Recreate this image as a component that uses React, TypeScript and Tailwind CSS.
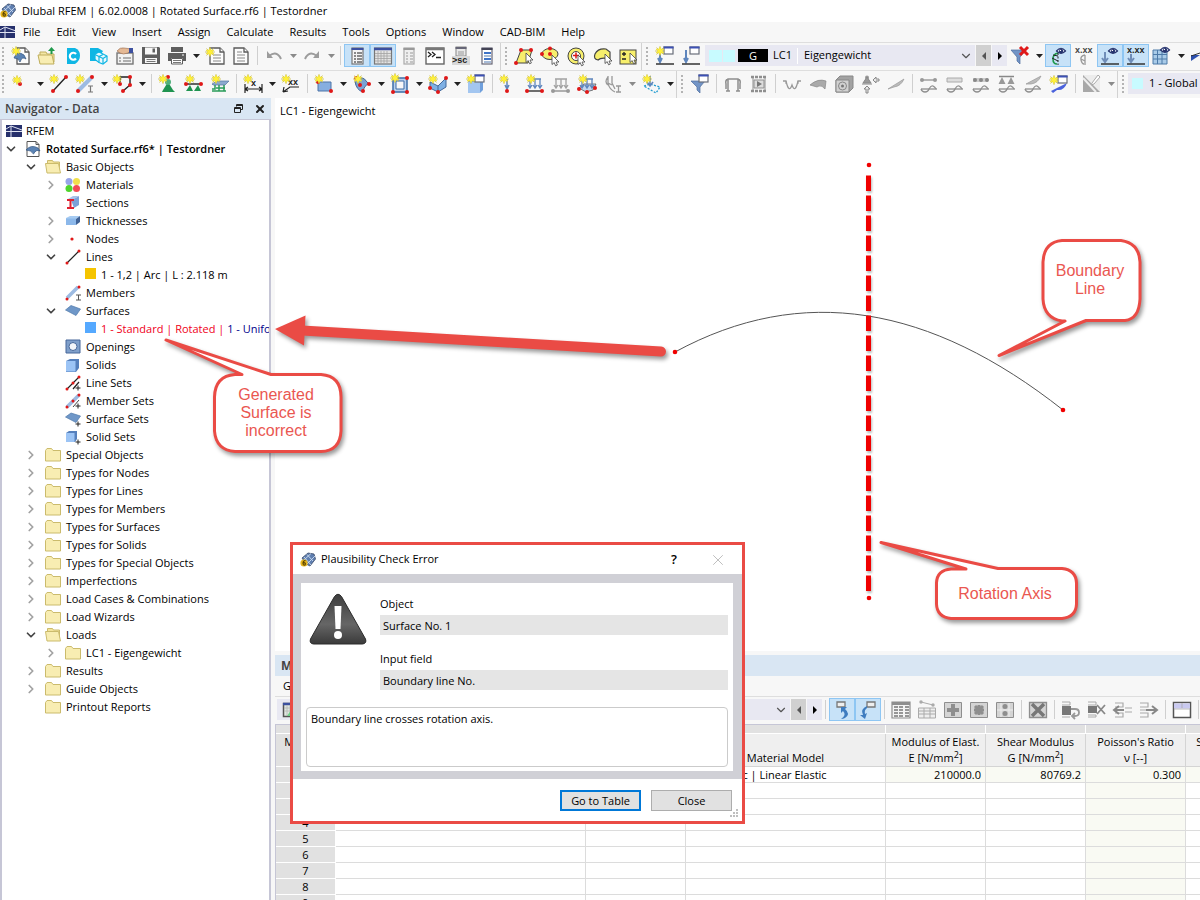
import { ReactNode } from "react";
import { ChevronDown, ChevronRight, X } from "lucide-react";

/* ---------- small drawing parts shared by the toolbar icons ---------- */

const Star = ({ x = 5, y = 5 }: { x?: number; y?: number }) => (
    <g transform={`translate(${x} ${y})`}>
        <path d="M0-5V5M-5 0H5M-3.500-3.500L3.500 3.500M3.500-3.500L-3.500 3.500" stroke="#c9bc50" strokeWidth=".8" />
        <path d="M0-4L1.3-1.8 4-2 2.2 0 4 2 1.3 1.8 0 4-1.3 1.8-4 2-2.2 0-4-2-1.3-1.8Z" fill="#fff03a" stroke="#e4d42c" strokeWidth=".5" />
    </g>
);

const Dot = ({ x, y, c = "#e01818" }: { x: number; y: number; c?: string }) => <circle cx={x} cy={y} r="2" fill={c} />;

const Win = ({ x, y }: { x: number; y: number }) => (
    <g>
        <rect x={x} y={y} width="9" height="7" fill="#fff" stroke="#6a6f7a" strokeWidth="1.2" />
        <path d={`M${x - 0.6} ${y + 0.5}h10.200`} stroke="#3c50b4" strokeWidth="2" />
    </g>
);

const Cursor = ({ x, y }: { x: number; y: number }) => (
    <path transform={`translate(${x} ${y})`} d="M0-1V8.500L2.200 6.600 3.600 9.800 5.400 9 4 6H7Z" fill="#fff" stroke="#444" strokeWidth=".8" />
);

const Eye = ({ x, y }: { x: number; y: number }) => (
    <g transform={`translate(${x} ${y})`}>
        <path d="M-4.5 0Q0-5.500 4.500 0Q0 4.500-4.500 0Z" fill="#e8ecfa" stroke="#27346e" strokeWidth="1.2" />
        <circle r="2.2" fill="#27346e" />
        <circle cx="-.6" cy="-.6" r=".7" fill="#fff" />
    </g>
);

const Wave = ({ y = 14 }: { y?: number }) => (
    <g fill="none" stroke="#8f8f8f" strokeWidth="1.3">
        <path d={`M2 ${y + 1}H18`} />
        <path d={`M2 ${y + 1}Q3 ${y + 4} 6 ${y + 4}Q9 ${y + 4} 10 ${y + 1}Q12 ${y - 3} 14 ${y - 2}T17 ${y + 1}`} />
    </g>
);

const Page = ({ x = 5, y = 2, w = 12, h = 16 }: { x?: number; y?: number; w?: number; h?: number }) => (
    <g fill="#fcfcfc" stroke="#5a5a5a" strokeWidth="1.3">
        <path d={`M${x} ${y}h${w - 4}l4 4v${h - 4}h${-w}Z`} />
        <path d={`M${x + w - 4} ${y}v4h4`} />
    </g>
);

const XText = ({ x, y, children, fill = "#222", size = 9 }: { x: number; y: number; children: ReactNode; fill?: string; size?: number }) => (
    <text x={x} y={y} fontSize={size} fontWeight="700" fill={fill} fontFamily="Liberation Sans, Arial, sans-serif">{children}</text>
);

const DownArrows = ({ c }: { c: string }) => <path d="M4 5H16M5 5v9M10 5v9M15 5v9M3 11l2 3 2-3M8 11l2 3 2-3M13 11l2 3 2-3" fill="none" stroke={c} strokeWidth="1.3" />;

/* ---------- toolbar building blocks ---------- */

function Tool({ label, on, children }: { label: string; on?: boolean; children: ReactNode }) {
    return (
        <button type="button" aria-label={label} className={`flex h-[23px] w-[26px] shrink-0 items-center justify-center border ${on ? "border-[#8ec6f3] bg-[#c7e2f8]" : "border-transparent hover:bg-[#e3eef8]"}`}>
            <svg width="20" height="20" viewBox="0 0 20 20" className="shrink-0 overflow-visible" fill="none">{children}</svg>
        </button>
    );
}

function Drop({ light, label = "More" }: { light?: boolean; label?: string }) {
    return (
        <button type="button" aria-label={label} className="flex h-[23px] w-3 shrink-0 items-center justify-center">
            <svg width="7" height="4" viewBox="0 0 7 4"><path d="M0 0H7L3.5 4Z" fill={light ? "#8a8a8a" : "#222"} /></svg>
        </button>
    );
}

const Sep = () => (
    <div className="flex h-[19px] w-[7px] shrink-0 justify-center"><div className="w-px bg-[#cfcfcf]" /></div>
);

const Grip = () => (
    <div className="flex h-[23px] w-[10px] shrink-0 items-center justify-center">
        <svg width="2" height="20"><path d="M1 1V20" stroke="#b4b4b4" strokeWidth="2" strokeDasharray="2 2" /></svg>
    </div>
);

const Group = ({ children }: { children: ReactNode }) => (
    <div className="flex h-full shrink-0 items-center border-r border-[#d2d2d2] pb-0.5">{children}</div>
);

function Step({ dir, disabled }: { dir: "prev" | "next"; disabled?: boolean }) {
    return (
        <button type="button" aria-label={dir === "prev" ? "Previous" : "Next"} disabled={disabled} className={`ml-px flex h-[21px] w-[15px] shrink-0 items-center justify-center ${disabled ? "bg-[#d0d0d0]" : "bg-[#e8e8f2]"}`}>
            <svg width="4" height="8" viewBox="0 0 4 8"><path d={dir === "prev" ? "M4 0V8L0 4Z" : "M0 0V8L4 4Z"} fill={disabled ? "#555" : "#000"} /></svg>
        </button>
    );
}

const AppLogo = () => (
    <svg width="16" height="16" viewBox="0 0 16 16" className="shrink-0">
        <path d="M2 6L8 1 14 2 15.500 7 10 14 6 12Z" fill="#5f7fb0" stroke="#3a4a68" strokeWidth=".8" />
        <path d="M4 5L11 13M7 2.500L13 9M3 9L11 1.500M7 12L15 4" stroke="#cddcf2" strokeWidth=".9" />
        <circle cx="4" cy="11" r="3.600" fill="#e6b51c" />
        <path d="M5.500 8.500Q3 8.500 3 11.500Q3.200 13.500 5 13Q6 11.500 4.600 10.700L3 11.300" fill="none" stroke="#5a4300" strokeWidth="1.100" />
    </svg>
);

const BridgeLogo = () => (
    <svg width="16" height="12" viewBox="0 0 16 12" className="shrink-0">
        <rect width="16" height="12" fill="#26306c" />
        <path d="M0 6.500H16M5 1V12M0 4L5 1L16 5" stroke="#dfe3f2" strokeWidth="1" fill="none" />
    </svg>
);

function MainToolbar() {
    return (
        <div className="flex h-7 items-center overflow-hidden border-t border-[#dedede]">
            <Group>
                <div className="-ml-0.5"><Grip /></div>
                <Tool label="New">
                    <Page x={6} /><path d="M3 12Q6 4 13 9L15 13Q11 10 9 16Q8 12 3 12Z" fill="#5b83b4" stroke="#2f527e" strokeWidth=".7" /><Star x={5} y={5} />
                </Tool>
                <Tool label="Open">
                    <path d="M3 16V6h6l1 2h7v8Z" fill="#f3e6a4" stroke="#bfae5c" /><path d="M1 9h14l2 9H3Z" fill="#f8edb2" stroke="#bfae5c" /><path d="M13.500 8V5h-2.500L14.500 1l3.500 4h-2.500v3Z" fill="#1f9a4c" />
                </Tool>
                <Tool label="Dlubal Center">
                    <path d="M4 2h8q5 2 5 7.500T12 18H4Z" fill="#0fb6e4" /><path d="M13 8A3.500 3.500 0 1 0 13 12.500" stroke="#fff" strokeWidth="2.200" />
                </Tool>
                <Tool label="Cloud models">
                    <path d="M1 2h8l5 3-6 10H1Z" fill="#0fb6e4" /><path d="M6 8l4-2 4 2 4 2v5L14 18l-4-1.500-4-3Z" fill="#e9f8fd" stroke="#0fb6e4" strokeWidth="1.200" /><path d="M6 8.500l4 2L14 8.500M10 10.500v6M14 12.500l4-2.500M14 12.500v5M10 10.500l4 2" stroke="#0fb6e4" strokeWidth="1.200" />
                </Tool>
                <Tool label="Model data">
                    <rect x="2" y="7" width="16" height="11" fill="#f2f2f2" stroke="#777" strokeWidth="1.400" /><path d="M4 12h2M8 12h8M4 15h2M8 15h8" stroke="#999" strokeWidth="1.300" /><path d="M2 5Q5 1 9 2L17 3 13 7Q8 9 5 7Z" fill="#e5b995" stroke="#94674a" strokeWidth=".6" /><path d="M14 2h4v5h-4Z" fill="#3c50a0" />
                </Tool>
                <Tool label="Save">
                    <path d="M1 1h17l1 1v16H1Z" fill="#5e5e5e" /><path d="M4 1.500h12v7H4Z" fill="#f7f7f7" /><path d="M11.500 2.500H14v4h-2.500Z" fill="#5e5e5e" /><path d="M4 12h12v5H4Z" fill="#f7f7f7" /><path d="M5.500 13.500h9M5.500 15.500h9" stroke="#777" />
                </Tool>
                <Tool label="Print">
                    <path d="M4 1h12v5H4Z" fill="#5e5e5e" /><path d="M1 7h18v8h-3v-3H4v3H1Z" fill="#5e5e5e" /><path d="M4.500 12.500h11V18h-11Z" fill="#fff" stroke="#5e5e5e" /><path d="M6 14.500h8M6 16.500h8" stroke="#777" /><path d="M15 9h2" stroke="#fff" />
                </Tool>
                <Drop />
                <Tool label="New printout report"><Page x={5} w={14} /><path d="M8 9h8M8 12h8M8 15h8" stroke="#888" strokeWidth="1.200" /><Star x={5} y={6} /></Tool>
                <Tool label="Printout report"><Page x={3} w={14} /><path d="M6 6h5M6 9h8M6 12h8M6 15h8" stroke="#888" strokeWidth="1.200" /></Tool>
                <Sep />
                <Tool label="Undo"><path d="M3 5V12H9Z" fill="#9c9c9c" /><path d="M5 10Q13 4 17 13" stroke="#9c9c9c" strokeWidth="2" /></Tool>
                <Drop light />
                <Tool label="Redo"><path d="M17 5V12H11Z" fill="#9c9c9c" /><path d="M15 10Q7 4 3 13" stroke="#9c9c9c" strokeWidth="2" /></Tool>
                <Drop light />
                <Sep />
                <Tool label="Navigator" on>
                    <rect x="5" y="2" width="11" height="16" fill="#f4f4f4" stroke="#777" strokeWidth="1.200" /><path d="M4.500 3h12" stroke="#3c50a0" strokeWidth="2" /><path d="M7 7h2M7 10h2M7 13h2M7 16h2" stroke="#666" strokeWidth="1.300" /><path d="M10 7h5M10 10h5M10 13h5M10 16h5" stroke="#666" strokeWidth="1.300" />
                </Tool>
                <Tool label="Tables" on>
                    <rect x="1.500" y="2" width="17" height="16" fill="#e4e4e4" stroke="#777" strokeWidth="1.200" /><path d="M1 3h18" stroke="#3c50a0" strokeWidth="2.500" /><path d="M2 7.500h16M2 10h16M2 12.500h16M2 15h16M5 5v13M8 5v13M11 5v13M14 5v13" stroke="#a2a2a2" strokeWidth=".8" />
                </Tool>
                <Tool label="Control panel"><rect x="5" y="2" width="10" height="16" fill="#efefef" stroke="#aaa" strokeWidth="1.200" /><path d="M4.500 3h11" stroke="#999" strokeWidth="2" /><path d="M7 7h2M7 10h2M7 13h2M7 16h2M11 7h3M11 10h3M11 13h3M11 16h3" stroke="#999" /></Tool>
                <Tool label="Console"><rect x="1" y="2" width="18" height="16" fill="#fff" stroke="#666" strokeWidth="1.400" /><path d="M1 3h18" stroke="#777" strokeWidth="2.500" /><path d="M3 6l3 2.500L3 11M7 6l3 2.500L7 11M11 11.500h5" stroke="#222" strokeWidth="1.300" /></Tool>
                <Tool label="Script"><rect x="5" y="1" width="10" height="9" fill="#e8e8e8" stroke="#888" /><path d="M4.500 2h11" stroke="#667" strokeWidth="2" /><path d="M7 6h6M7 8h6" stroke="#999" /><path d="M1 10h18v9H1Z" fill="#d8d8d8" /><XText x={1} y={17}>&gt;sc</XText></Tool>
                <Tool label="Project list"><rect x="5" y="2" width="10" height="16" fill="#fff" stroke="#667" strokeWidth="1.200" /><path d="M4.500 3h11" stroke="#445" strokeWidth="2" /><path d="M7 7h7M7 13h7" stroke="#3f74c8" strokeWidth="2" /><path d="M7 10h7M7 16h7" stroke="#8aa6cc" strokeWidth="1.300" /></Tool>
            </Group>
            <Group>
                <Grip />
                <Tool label="Select by rectangle"><path d="M7 4h11l-4 13H2Z" fill="#f7ef6c" stroke="#444" /><Dot x={7} y={4} /><Dot x={17} y={4} /><Dot x={2} y={17} /><Cursor x={12} y={8} /></Tool>
                <Tool label="Select by ellipse"><ellipse cx="10" cy="8" rx="8" ry="5.500" fill="#f7ef6c" stroke="#444" /><Dot x={10} y={2.5} /><Dot x={2} y={8} /><Dot x={10} y={8} /><Cursor x={12} y={10} /></Tool>
                <Tool label="Select by ring"><circle cx="10" cy="10" r="8" fill="#f7ef6c" stroke="#444" /><circle cx="10" cy="10" r="4.500" fill="#fff" stroke="#444" /><path d="M10 6.500v6M7 9.500h6" stroke="#e01818" strokeWidth="1.500" /><Cursor x={12} y={10} /></Tool>
                <Tool label="Select by freeform"><path d="M3 8Q6 2 14 3L18 6V13Q9 11 6 14Q1 13 3 8Z" fill="#f7ef6c" stroke="#444" strokeWidth="1.200" /><Cursor x={13} y={9} /></Tool>
                <Tool label="Add or remove selection"><rect x="2" y="4" width="16" height="14" fill="#f7ef6c" stroke="#444" /><path d="M4 8h4M6 6v4M4 13h4" stroke="#222" strokeWidth="1.300" /><Cursor x={12} y={8} /></Tool>
            </Group>
            <div className="flex h-full min-w-0 flex-1 items-center pb-0.5">
                <Grip />
                <Tool label="New load case"><path d="M5 5v10M3 12l2 4 2-4" stroke="#5f86bd" strokeWidth="2" /><path d="M1 18h18" stroke="#333" strokeWidth="1.500" /><Win x={9} y={1} /><Star x={5} y={5} /></Tool>
                <Tool label="Edit load case"><path d="M5 4v11M3 12l2 4 2-4" stroke="#5f86bd" strokeWidth="2" /><path d="M1 18h18" stroke="#333" strokeWidth="1.500" /><Win x={9} y={1} /></Tool>
                <div className="ml-px flex h-[21px] w-[270px] shrink-0 items-center bg-[#e8e8f2] pr-0.5 pl-1">
                    <span className="h-3 w-[13px] bg-[#c8fbff]" />
                    <span className="ml-px h-3 w-3 bg-[#c8fbff]" />
                    <span className="ml-[3px] h-[13px] w-[30px] bg-black text-center text-[11px] leading-[13px] text-white">G</span>
                    <label htmlFor="loadcase" className="ml-[5px] w-5">LC1</label>
                    <span className="ml-1 h-4 w-px bg-white" />
                    <select id="loadcase" className="ml-1.5 min-w-0 flex-1 appearance-none bg-transparent outline-none"><option>Eigengewicht</option></select>
                    <ChevronDown size={14} strokeWidth={2} className="shrink-0 text-[#555]" />
                </div>
                <Step dir="prev" disabled />
                <Step dir="next" />
                <Tool label="Clear filter"><path d="M1 4h15L10 11v7L7 15v-4Z" fill="#7294c6" stroke="#4d6d9e" strokeWidth=".7" /><path d="M10 1l8 8M18 1l-8 8" stroke="#e01818" strokeWidth="3" /></Tool>
                <Drop />
                <Tool label="Show results" on><path d="M10 7Q5 8 5 13T9 18" stroke="#1f9a4c" strokeWidth="1.600" /><path d="M10 7v12" stroke="#222" strokeDasharray="2 1.500" /><path d="M4 12l6 3M5 9l5 1" stroke="#222" /><Eye x={13} y={5} /></Tool>
                <Tool label="Show result values"><XText x={1} y={7} fill="#444">x.xx</XText><path d="M11 9Q6 10 7 14T10 18M11 9v10M7 13l4 2" stroke="#999" strokeWidth="1.300" /></Tool>
                <Tool label="Show loads" on><path d="M5 6v9M2 12l3 4 3-4" stroke="#6f8db8" strokeWidth="2" /><path d="M1 18h18" stroke="#333" strokeWidth="1.500" /><Eye x={13} y={5} /></Tool>
                <Tool label="Show load values" on><XText x={1} y={7}>x.xx</XText><path d="M5 8v7M2 12l3 4 3-4" stroke="#6f8db8" strokeWidth="2" /><path d="M1 18h18" stroke="#333" strokeWidth="1.500" /></Tool>
                <Tool label="Result grid"><path d="M1 4h14v14H1Z" fill="#a9cbe8" stroke="#4d7aa8" /><path d="M1 8.500h14M1 13h14M5.500 4v14M10 4v14" stroke="#4d7aa8" /><Eye x={13} y={4} /></Tool>
                <Drop />
                <Tool label="Result diagram"><path d="M1 9H10L1 15Z" fill="#2c4fae" /><path d="M1 10L19 4" stroke="#333" /></Tool>
            </div>
        </div>
    );
}

function ModelToolbar() {
    return (
        <div className="flex h-7 items-center overflow-hidden border-t border-[#dedede]">
            <Group>
                <div className="-ml-0.5"><Grip /></div>
                <Tool label="New node"><Dot x={9} y={10} /><Star x={6} y={6} /></Tool>
                <Drop />
                <Tool label="New line"><path d="M4 17L17 3" stroke="#222" strokeWidth="1.400" /><Dot x={4} y={17} /><Dot x={17} y={3} /><Star x={5} y={5} /></Tool>
                <Tool label="New member"><path d="M3 17L17 3" stroke="#9dbbe2" strokeWidth="4" /><Dot x={3} y={17} /><Dot x={17} y={3} /><path d="M13 12h5M15.500 12v6M13 18h5" stroke="#777" strokeWidth="1.200" /><Star x={5} y={5} /></Tool>
                <Drop />
                <Tool label="New polyline"><path d="M7 9V3H17V11L10 17" stroke="#222" strokeWidth="1.400" /><Dot x={7} y={10} /><Dot x={17} y={3} /><Dot x={17} y={11} /><Dot x={10} y={17} /><Star x={4} y={5} /></Tool>
                <Drop />
                <Sep />
                <Tool label="Nodal support"><path d="M10 8l5 8 2 2H4l1-2Z" fill="#1f9350" /><circle cx="10" cy="8" r="3" fill="#4fb07c" /><Dot x={10} y={3} /><Star x={5} y={5} /></Tool>
                <Tool label="Line support"><path d="M2 10H17" stroke="#222" strokeWidth="1.400" /><path d="M6 11l3 6H2ZM14 11l3 6h-7Z" fill="#1f9350" /><Dot x={2} y={10} /><Dot x={17} y={10} /><Star x={6} y={5} /></Tool>
                <Tool label="Surface support"><path d="M2 10L7 7h12l-4 4H3Z" fill="#8ba9cf" stroke="#54759f" strokeWidth=".7" /><path d="M5 11v4h-3M9 11v6M14 11v6M2 17h14M6 14h9" stroke="#2a9c5a" strokeWidth="1.500" /><Star x={6} y={5} /></Tool>
                <Sep />
                <Tool label="Dimension"><path d="M2 10v9M19 10v9M2 15H19M2 15l3-2M2 15l3 2M19 15l-3-2M19 15l-3 2" stroke="#222" strokeWidth="1.200" /><XText x={8} y={12}>x</XText><Star x={5} y={5} /></Tool>
                <Drop />
                <Tool label="Note"><path d="M18 13H9L2 18M2 18l1-5M2 18l5-1" stroke="#222" strokeWidth="1.200" /><XText x={7} y={11}>xx</XText><Star x={5} y={5} /></Tool>
                <Sep />
                <Tool label="New surface"><path d="M4 8h13v9H4Z" fill="#86aee0" stroke="#4d74a8" /><Dot x={17} y={17} /><Dot x={4} y={8} /><Star x={5} y={5} /></Tool>
                <Drop />
                <Tool label="New curved surface"><path d="M3 7Q10 0 15 8L17 10Q12 11 11 18Q4 16 3 7Z" fill="#7aa2d4" stroke="#42689b" /><Dot x={4} y={4} /><Dot x={17} y={10} /><Dot x={8} y={11} /><Dot x={11} y={17} /><Star x={6} y={5} /></Tool>
                <Drop />
                <Tool label="New opening"><path d="M3 4h14v14H3Z" fill="#b9d0ec" stroke="#3d6da8" strokeWidth="1.500" /><path d="M6 7h8v8H6Z" fill="#f7f7f7" stroke="#3d6da8" /><Dot x={3} y={18} /><Dot x={17} y={4} /><Dot x={17} y={18} /><Star x={5} y={4} /></Tool>
                <Drop />
                <Tool label="New solid"><path d="M2 8l8 4 8-8v9l-8 5-8-4Z" fill="#7eb0e4" stroke="#42689b" /><path d="M10 12v6" stroke="#42689b" /><Dot x={18} y={4} /><Dot x={2} y={14} /><Dot x={10} y={18} /><Star x={5} y={5} /></Tool>
                <Drop />
                <Tool label="New block"><path d="M2 8l3-2h12v10l-3 3H2Z" fill="#6f9fdc" /><path d="M2 8h12v11H2Z" fill="#a3c6f0" /><Win x={9} y={1} /><Star x={5} y={5} /></Tool>
                <Sep />
                <Tool label="Nodal load"><path d="M8 5v10M6 11l2 4 2-4" stroke="#5f86bd" strokeWidth="1.500" /><Dot x={8} y={17} /><Star x={5} y={5} /></Tool>
                <Tool label="Line load"><DownArrows c="#5f86bd" /><path d="M2 17H17" stroke="#222" strokeWidth="1.300" /><Dot x={2} y={17} /><Dot x={17} y={17} /><Star x={6} y={5} /></Tool>
                <Tool label="Member load"><DownArrows c="#a2a2a2" /><path d="M2 17H17" stroke="#888" strokeWidth="1.300" /><Dot x={2} y={17} c="#999" /><Dot x={17} y={17} c="#999" /></Tool>
                <Tool label="Surface load"><path d="M2 14l5-4h12l-3 6-7 2Z" fill="#c4d6ee" stroke="#555" strokeWidth=".8" /><DownArrows c="#5f86bd" /><Dot x={2} y={15} /><Dot x={18} y={14} /><Dot x={10} y={18} /><Star x={6} y={5} /></Tool>
                <Tool label="Free load"><path d="M5 2v7Q6 15 12 18M5 3Q1 8 5 11M9 2v7l3 6M5 9l4 2M13 12h5M15.500 12v6M13 18h5" stroke="#999" strokeWidth="1.300" /></Tool>
                <Drop light />
                <Tool label="Imposed load"><path d="M3 12l6-2 10 3-4 6Z" stroke="#1f9bd0" strokeDasharray="2 1.500" strokeWidth="1.300" /><path d="M9 2v9M6 8l3 4 3-4" stroke="#5f86bd" strokeWidth="1.600" /><Star x={6} y={5} /></Tool>
                <Drop />
            </Group>
            <Group>
                <Grip />
                <Tool label="Filter"><path d="M1 7h14L10 13v6l-3-3v-3Z" fill="#7294c6" stroke="#4d6d9e" strokeWidth=".7" /><Win x={9} y={1} /></Tool>
                <Sep />
                <Tool label="Supports"><path d="M5 17V5h10v12M3 17h4M13 17h4M5 5Q2 6 3 10V15M15 5Q18 6 17 10V15" stroke="#8f8f8f" strokeWidth="1.500" /></Tool>
                <Tool label="Animation"><path d="M2 3h16M2 17h16" stroke="#8f8f8f" strokeWidth="2.500" strokeDasharray="3 1" /><path d="M4 3v14M16 3v14" stroke="#8f8f8f" /><path d="M5 6h10v8H5Z" fill="#ddd" stroke="#8f8f8f" /><path d="M8 7v6l5-3Z" fill="#777" /></Tool>
                <Sep />
                <Tool label="Deformation"><path d="M1 7H4Q7 20 10 11Q13 20 16 7H19" stroke="#999" strokeWidth="1.300" /><path d="M4 7v3M16 7v3" stroke="#999" /></Tool>
                <Tool label="Surface results"><path d="M2 11Q10 4 18 7L17 15Q14 11 11 12L9 13Z" fill="#aaa" stroke="#888" strokeWidth=".7" /></Tool>
                <Tool label="Solid results"><path d="M2 6l4-4h13v12l-4 4H2Z" fill="#a2a2a2" stroke="#888" /><path d="M2 6h13v12H2Z" fill="#d2d2d2" stroke="#888" /><circle cx="8.500" cy="12" r="4" stroke="#888" /><circle cx="8.500" cy="12" r="1.500" fill="#777" /></Tool>
                <Tool label="Reactions"><circle cx="7" cy="3.500" r="2" fill="#999" /><path d="M7 3l4 6H3ZM2 10h10" fill="#999" stroke="#888" /><path d="M19 5h-3V3l-3 3 3 3V7h3Z" fill="#e8e8e8" stroke="#888" /><path d="M6 19v-4H4l3-3 3 3H8v4Z" fill="#e8e8e8" stroke="#888" /></Tool>
                <Tool label="Section results"><path d="M2 15L18 5Q15 12 8 13Z" fill="#bbb" stroke="#999" strokeWidth=".7" /></Tool>
                <Sep />
                <Tool label="Diagram line"><path d="M2 6H17" stroke="#999" strokeWidth="1.400" /><Dot x={3} y={6} c="#999" /><Dot x={16} y={6} c="#999" /><Wave /></Tool>
                <Tool label="Diagram member"><path d="M2 4h15v4H2Z" fill="#ddd" stroke="#aaa" /><Wave /></Tool>
                <Tool label="Diagram section"><path d="M2 6H17" stroke="#ccc" strokeWidth="4" /><Dot x={4} y={6} c="#888" /><Dot x={10} y={6} c="#888" /><Dot x={16} y={6} c="#888" /><Wave /></Tool>
                <Tool label="Diagram supports"><path d="M2 2.500H17" stroke="#888" strokeWidth="1.500" /><path d="M5 3l3.500 7h-7ZM14 3l3.500 7h-7Z" fill="#999" /><Wave /></Tool>
                <Tool label="Diagram surface"><path d="M3 10L18 2Q15 9 8 10Z" fill="#bbb" stroke="#999" strokeWidth=".7" /><Wave /></Tool>
                <Tool label="New section"><path d="M2 17L18 9Q15 17 8 16L4 19Z" fill="#4a62dd" /><Win x={9} y={2} /><Star x={5} y={6} /></Tool>
                <Sep />
                <Tool label="Display options"><path d="M1 1h17v17H1Z" fill="#ececec" /><path d="M1 1v17h17Z" fill="#a8a8a8" /><path d="M1 4l13 14" stroke="#eee" strokeWidth="2" /><path d="M10 9l6-8 2 2-6 7-3 1Z" fill="#fff" stroke="#aaa" /></Tool>
                <Drop light />
            </Group>
            <div className="flex h-full min-w-0 flex-1 items-center pb-0.5">
                <Grip />
                <div className="flex h-[21px] flex-1 items-center bg-[#e8e8f2] pl-1">
                    <span className="h-[11px] w-[11px] shrink-0 bg-[#c8fbff]" />
                    <select aria-label="Coordinate system" className="ml-1.5 w-40 shrink-0 appearance-none bg-transparent outline-none"><option>1 - Global XYZ</option></select>
                </div>
            </div>
        </div>
    );
}

/* ---------- navigator ---------- */

const treeIcons: Record<string, ReactNode> = {
    file: <><path d="M2 .500h9l3 3v12H2Z" fill="#fff" stroke="#555" /><path d="M11 .500v3h3" stroke="#555" /><path d="M1 9Q6 3 13 7L15 10Q11 8 8.500 13Q6 9 1 9Z" fill="#5b83b4" stroke="#2f527e" strokeWidth=".7" /></>,
    folder: <path d="M.500 14V3.500L2 1.500h4.500l1.500 2h7.500V14Z" fill="#f8edb2" stroke="#cbbb6c" />,
    folderOpen: <><path d="M2.500 13V1.500h5l1 1.500h6v10Z" fill="#f3e39a" stroke="#cbbb6c" /><path d="M.500 4.500h13l2 9.500H2Z" fill="#f8edb2" stroke="#cbbb6c" /></>,
    materials: <><circle cx="4" cy="4.500" r="3.500" fill="#97a4e8" /><circle cx="11.500" cy="4.500" r="3.500" fill="#f1e04c" /><circle cx="4" cy="11.500" r="3.500" fill="#4fd42c" /><circle cx="11.500" cy="11.500" r="3.500" fill="#f24b55" /></>,
    sections: <><path d="M6 5L14 1v9l-5 3Z" fill="#7ba0d8" /><path d="M3 4l5-3h6l-5 3Z" fill="#a8c2ea" /><path d="M2 5h7M5.500 5v8M2 13h7" stroke="#e02030" strokeWidth="2" /></>,
    thicknesses: <><path d="M1 5l4-2h10l-4 3v6H1Z" fill="#a6cbf2" /><path d="M11 6l4-3v6l-4 3Z" fill="#3f6296" /><path d="M1 5.500h10V12H1Z" fill="#8cb8ea" /></>,
    nodes: <circle cx="7" cy="8" r="1.600" fill="#e01818" />,
    lines: <><path d="M2 14L14 2" stroke="#222" strokeWidth="1.200" /><circle cx="2" cy="14" r="1.500" fill="#e01818" /><circle cx="14" cy="2" r="1.500" fill="#e01818" /></>,
    members: <><path d="M2 13L13 2" stroke="#9dbbe2" strokeWidth="3.500" /><circle cx="2" cy="14" r="1.500" fill="#e01818" /><circle cx="14" cy="2" r="1.500" fill="#e01818" /><path d="M11 10h5M13.500 10v5M11 15h5" stroke="#555" /></>,
    surfaces: <path d="M.500 7L6 2.500 15.500 6 11 12.500Z" fill="#6f97c8" stroke="#507aab" strokeWidth=".700" />,
    openings: <><path d="M1 1h14v13H1Z" fill="#7f9fca" stroke="#46679a" /><circle cx="8" cy="7.500" r="4" fill="#f4f6fa" stroke="#46679a" /></>,
    solids: <><path d="M1 4l4-2h9v9l-3 4H1Z" fill="#5580bd" /><path d="M1 4h9.500v10.500H1Z" fill="#9cc4f5" /></>,
    lineSets: <><path d="M2 14L14 2M8 14L14 7" stroke="#222" strokeWidth="1.200" /><circle cx="2" cy="14" r="1.500" fill="#e01818" /><circle cx="8" cy="8" r="1.500" fill="#e01818" /><circle cx="14" cy="2" r="1.500" fill="#e01818" /><path d="M10.500 13h5M13 10.500v5" stroke="#222" /></>,
    memberSets: <><path d="M2 14L14 2" stroke="#9dbbe2" strokeWidth="3.500" /><path d="M8 14L14 7" stroke="#444" /><circle cx="2" cy="14" r="1.500" fill="#e01818" /><circle cx="8" cy="8" r="1.500" fill="#e01818" /><circle cx="14" cy="2" r="1.500" fill="#e01818" /><path d="M10.500 13h5M13 10.500v5" stroke="#222" /></>,
    surfaceSets: <><path d="M.500 6L6 2 15.500 5 11 11.500Z" fill="#6f97c8" stroke="#507aab" strokeWidth=".700" /><path d="M10.500 13h5M13 10.500v5" stroke="#222" /></>,
    solidSets: <><path d="M1 4l3-2h8v8l-2 3H1Z" fill="#5580bd" /><path d="M1 4h8.500v9H1Z" fill="#9cc4f5" /><path d="M10.500 13h5M13 10.500v5" stroke="#222" /></>,
    yellow: <path d="M2 1h11v11H2Z" fill="#f5c400" />,
    blue: <path d="M2 1h11v11H2Z" fill="#55a9ff" />,
};

type TreeRow = { level: 1 | 2 | 3 | 4; icon: string; text: ReactNode; state?: "open" | "closed"; bold?: boolean };

const tree: TreeRow[] = [
    { level: 1, icon: "file", text: "Rotated Surface.rf6* | Testordner", state: "open", bold: true },
    { level: 2, icon: "folderOpen", text: "Basic Objects", state: "open" },
    { level: 3, icon: "materials", text: "Materials", state: "closed" },
    { level: 3, icon: "sections", text: "Sections" },
    { level: 3, icon: "thicknesses", text: "Thicknesses", state: "closed" },
    { level: 3, icon: "nodes", text: "Nodes", state: "closed" },
    { level: 3, icon: "lines", text: "Lines", state: "open" },
    { level: 4, icon: "yellow", text: "1 - 1,2 | Arc | L : 2.118 m" },
    { level: 3, icon: "members", text: "Members" },
    { level: 3, icon: "surfaces", text: "Surfaces", state: "open" },
    { level: 4, icon: "blue", text: <><span className="text-[#f00020]">1 - Standard | Rotated | </span><span className="text-[#00008b]">1 - Unifo</span></> },
    { level: 3, icon: "openings", text: "Openings" },
    { level: 3, icon: "solids", text: "Solids" },
    { level: 3, icon: "lineSets", text: "Line Sets" },
    { level: 3, icon: "memberSets", text: "Member Sets" },
    { level: 3, icon: "surfaceSets", text: "Surface Sets" },
    { level: 3, icon: "solidSets", text: "Solid Sets" },
    { level: 2, icon: "folder", text: "Special Objects", state: "closed" },
    { level: 2, icon: "folder", text: "Types for Nodes", state: "closed" },
    { level: 2, icon: "folder", text: "Types for Lines", state: "closed" },
    { level: 2, icon: "folder", text: "Types for Members", state: "closed" },
    { level: 2, icon: "folder", text: "Types for Surfaces", state: "closed" },
    { level: 2, icon: "folder", text: "Types for Solids", state: "closed" },
    { level: 2, icon: "folder", text: "Types for Special Objects", state: "closed" },
    { level: 2, icon: "folder", text: "Imperfections", state: "closed" },
    { level: 2, icon: "folder", text: "Load Cases & Combinations", state: "closed" },
    { level: 2, icon: "folder", text: "Load Wizards", state: "closed" },
    { level: 2, icon: "folderOpen", text: "Loads", state: "open" },
    { level: 3, icon: "folder", text: "LC1 - Eigengewicht", state: "closed" },
    { level: 2, icon: "folder", text: "Results", state: "closed" },
    { level: 2, icon: "folder", text: "Guide Objects", state: "closed" },
    { level: 2, icon: "folder", text: "Printout Reports" },
];

const indent = { 1: "pl-0", 2: "pl-5", 3: "pl-10", 4: "pl-[60px]" };

function Navigator() {
    return (
        <aside className="flex w-[271px] shrink-0 flex-col">
            <div className="flex h-[21px] shrink-0 items-center bg-[#d9e6f3] pr-px pl-[5px]">
                <h2 className="flex-1 text-[12px] font-semibold text-[#444]">Navigator - Data</h2>
                <button type="button" aria-label="Undock" className="flex w-[21px] justify-center">
                    <svg width="9" height="9" viewBox="0 0 9 9" fill="none" stroke="#222"><path d="M2.500 2.500V.500H8.500V5.500H6.500M2.500 1.500H8.500" /><path d="M.500 3.500H6.500V8.500H.500ZM.500 4.500H6.500" /></svg>
                </button>
                <button type="button" aria-label="Close navigator" className="flex w-[21px] justify-center"><X size={12} strokeWidth={4} className="text-[#222]" /></button>
            </div>
            <ul className="flex-1 overflow-hidden border-x-2 border-t border-[#c6c6d6] bg-white pt-0.5">
                <li className="flex h-[18px] items-center">
                    <span className="flex w-6 shrink-0 justify-center"><BridgeLogo /></span>RFEM
                </li>
                {tree.map((row, i) => (
                    <li key={i} className={`flex h-[18px] items-center whitespace-nowrap ${indent[row.level]} ${row.bold ? "font-semibold" : ""}`}>
                        <span className="flex w-[18px] shrink-0 justify-center">
                            {row.state === "open" && <ChevronDown size={14} strokeWidth={3} className="text-[#444]" />}
                            {row.state === "closed" && <ChevronRight size={14} strokeWidth={3} className="text-[#a2a2a2]" />}
                        </span>
                        <span className={`flex shrink-0 justify-center ${row.level === 4 ? "w-[21px]" : "w-[26px]"}`}>
                            <svg width="16" height="16" viewBox="0 0 16 16" fill="none">{treeIcons[row.icon]}</svg>
                        </span>
                        <span>{row.text}</span>
                    </li>
                ))}
            </ul>
        </aside>
    );
}

/* ---------- model view ---------- */

function ModelView() {
    return (
        <section className="relative min-h-0 flex-1 overflow-hidden bg-white">
            <p className="px-[5px] pt-1 leading-[18px]">LC1 - Eigengewicht</p>
            <svg className="absolute top-0 left-0" width="925" height="553" viewBox="275 98 925 553" fill="none">
                <path d="M675 352C802 283 930 305 1063 410" stroke="#555" strokeWidth="1" />
                <path d="M868.500 175.500V592" stroke="#f00000" strokeWidth="5" strokeDasharray="15.500 4.500" style={{ filter: "drop-shadow(1px 2px 1px #0004)" }} />
                <g fill="#f00000">
                    <circle cx="869" cy="165" r="2.300" />
                    <circle cx="869" cy="598" r="2.300" />
                    <circle cx="675" cy="352" r="2.300" />
                    <circle cx="1063" cy="410" r="2.300" />
                </g>
            </svg>
        </section>
    );
}

function Annotations() {
    return (
        <svg className="pointer-events-none absolute top-0 left-0" width="1200" height="900" viewBox="0 0 1200 900" fill="none">
            <g style={{ filter: "drop-shadow(2px 3px 2px #0006)" }}>
                <path d="M302 330.500L661 351.500" stroke="#ea4b45" strokeWidth="10" strokeLinecap="round" />
                <path d="M275 329L305.500 315.500L304 345.500Z" fill="#ea4b45" />
                <g fill="#fff" stroke="#ea4b45" strokeWidth="3" strokeLinejoin="round">
                    <path d="M242 374.500L166 340L271 374.500H321Q341 376 341 397V431Q340 451 321 451.500H235Q216 450 214.500 431V397Q215 376 235 374.500Z" />
                    <path d="M1065 321H1062Q1044 318 1043 299V262Q1044 242 1062 240.500H1121Q1139 243 1140 262V299Q1139 319 1125 320.500H1086L999 355.500Z" />
                    <path d="M966 569L881 542.500L998 568.500H1062Q1076 570 1076.500 583V604Q1076 617 1062 618.500H951Q937 617 936.500 604V583Q937 570 951 569Z" />
                </g>
            </g>
            <g fill="#ea5751" fontFamily="Liberation Sans, Arial, sans-serif" fontSize="16" textAnchor="middle">
                <text x="276" y="400">Generated</text>
                <text x="276" y="418">Surface is</text>
                <text x="276" y="436">incorrect</text>
                <text x="1090" y="276">Boundary</text>
                <text x="1090" y="294">Line</text>
                <text x="1005" y="599">Rotation Axis</text>
            </g>
        </svg>
    );
}

/* ---------- table panel ---------- */

const columns = [
    { top: "", bottom: "Material Name" },
    { top: "Material", bottom: "Type" },
    { top: "", bottom: "Material Model" },
    { top: "Modulus of Elast.", bottom: <>E [N/mm<sup className="text-[9px] leading-none">2</sup>]</> },
    { top: "Shear Modulus", bottom: <>G [N/mm<sup className="text-[9px] leading-none">2</sup>]</> },
    { top: "Poisson's Ratio", bottom: "ν [--]" },
    { top: "Specific Weight", bottom: <>γ [kN/m<sup className="text-[9px] leading-none">3</sup>]</> },
];

const firstRow = ["S235", "Steel", "Isotropic | Linear Elastic", "210000.0", "80769.2", "0.300", "78.50"];

function Cell({ row, col }: { row: number; col: number }) {
    const tint = col === 5 || (row === 0 && col > 2) ? "bg-[#f9faf3]" : "bg-white";
    const align = col > 2 ? "text-right pr-1" : col === 2 ? "pl-[17px]" : "pl-1";
    return <td className={`h-4 border-r border-b border-[#dcdcdc] ${tint} ${align}`}>{row === 0 ? firstRow[col] : ""}</td>;
}

function TablePanel() {
    const grey = "#8e8e8e";
    return (
        <section className="h-[249px] shrink-0 overflow-hidden bg-[#f7f7f7] pt-1">
            <h2 className="h-[21px] bg-[#d9e6f3] pl-1.5 text-[12px] leading-[21px] font-bold text-[#444]">Materials</h2>
            <div className="flex h-5 items-center gap-4 pl-2"><button type="button">Go To</button><button type="button">Edit</button><button type="button">Selection</button></div>
            <div className="flex h-7 items-center border-t border-[#dedede] pb-0.5">
                <div className="ml-0.5 flex h-[21px] w-[513px] shrink-0 items-center bg-[#e8e8f2] pr-0.5 pl-[5px]">
                    <svg width="16" height="16" viewBox="0 0 16 16" className="shrink-0"><path d="M1.500 1.500h13v13h-13Z" fill="#e0e6e0" stroke="#555" strokeWidth="1.500" /><path d="M1 2h14" stroke="#3c50a0" strokeWidth="2.500" /><path d="M2 6h12M2 9h12M5 3v11M8 3v11" stroke="#b5b5b5" strokeWidth=".8" /><path d="M5 14l4-6 5 6Z" fill="#6fd08a" /></svg>
                    <select aria-label="Table" className="ml-2 min-w-0 flex-1 appearance-none bg-transparent outline-none"><option>Structure</option></select>
                    <ChevronDown size={14} strokeWidth={2} className="shrink-0 text-[#555]" />
                </div>
                <Step dir="prev" disabled />
                <Step dir="next" />
                <Sep />
                <Tool label="Select in model" on><path d="M5 2h8v5H5Z" fill="#eee" stroke="#777" strokeWidth="1.300" /><path d="M9 7h6l-2 2q6 5 0 9-2 1-4 1 6-4 2-8l-2 2Z" fill="#3f7cbf" /></Tool>
                <Tool label="Select in table" on><path d="M9 2h8v5H9Z" fill="#eee" stroke="#777" strokeWidth="1.300" /><path d="M9 6Q2 9 5 15H2l5 4 2-6-2 1Q6 10 9 8Z" fill="#3f7cbf" /></Tool>
                <Sep />
                <Tool label="Columns"><path d="M1 2h18v16H1Z" fill="#f4f4f4" stroke={grey} strokeWidth="1.200" /><path d="M1 3.500h18" stroke={grey} strokeWidth="3" /><path d="M3 7h4M8 7h4M14 7h4M3 10h4M8 10h4M14 10h4M3 13h4M8 13h4M14 13h4M3 16h4M8 16h4M14 16h4" stroke="#777" strokeWidth="1.300" /></Tool>
                <Tool label="Edit table"><path d="M1.500 8h17v10h-17ZM1.500 11h17M1.500 14h17M7 8v10M13 8v10" fill="#eee" stroke="#aaa" /><path d="M4 2l12 3" stroke="#aaa" /><circle cx="4" cy="2" r="1.700" fill="#aaa" /><circle cx="16" cy="5" r="1.700" fill="#aaa" /></Tool>
                <Tool label="Insert row"><path d="M1.500 2.500h17v15h-17Z" fill="#d4d4d4" stroke={grey} /><path d="M10 4v12M4 10h12" stroke={grey} strokeWidth="4" /></Tool>
                <Tool label="Clear row"><path d="M1.500 2.500h17v15h-17Z" fill="#d4d4d4" stroke={grey} /><path d="M6 6l8 8M14 6l-8 8M10 5v10M5 10h10" stroke={grey} strokeWidth="3" /></Tool>
                <Tool label="Row options"><path d="M1.500 2.500h17v15h-17Z" fill="#d4d4d4" stroke={grey} /><path d="M2 10h16M6 3v14M14 3v14" stroke="#eee" /><circle cx="10" cy="6.500" r="2.500" fill={grey} /><circle cx="10" cy="13.500" r="2.500" fill={grey} /></Tool>
                <Sep />
                <Tool label="Delete all"><path d="M1.500 2.500h17v15h-17Z" fill="#d4d4d4" stroke={grey} strokeWidth="1.300" /><path d="M4 4l12 12M16 4L4 16" stroke="#777" strokeWidth="3.500" /></Tool>
                <Sep />
                <Tool label="Copy row"><path d="M1 2h8v3H1M1 17h8" stroke="#aaa" /><path d="M1 6h9v9H1Z" fill="#777" /><path d="M10 9h4q4 0 4 3.500T14 16h-2M14 13l-3 3 3 3" stroke="#999" strokeWidth="1.800" /></Tool>
                <Tool label="Delete row"><path d="M1 2h8v3H1M1 17h8v-2H1" stroke="#aaa" /><path d="M1 6h9v7H1Z" fill="#777" /><path d="M10 5l8 9M18 5l-8 9" stroke="#888" strokeWidth="1.800" /></Tool>
                <Tool label="Insert above"><path d="M2 3h8v4H2M2 17h8v-4H2M12 8h7M12 12h7" stroke="#aaa" strokeWidth="1.200" /><path d="M2 10h9M6 6l-5 4 5 4" stroke="#888" strokeWidth="2" /></Tool>
                <Tool label="Insert below"><path d="M1 3h8v4H1M1 17h8v-4H1M1 10h7" stroke="#aaa" strokeWidth="1.200" /><path d="M7 10h10M13 6l5 4-5 4" stroke="#888" strokeWidth="2" /></Tool>
                <Sep />
                <Tool label="Table view"><path d="M1.500 2.500h17v15h-17Z" fill="#fff" stroke="#555" strokeWidth="1.500" /><path d="M2 3.500h16v5H2Z" fill="#c9c9f0" /><path d="M2 9h16M10 3v5" stroke="#aaa" strokeWidth=".8" /></Tool>
                <Sep />
            </div>
            <table className="w-full min-w-[1010px] table-fixed border-separate border-spacing-0 border-t border-l border-[#c6c6d6] leading-[15px]">
                <colgroup>
                    <col className="w-[60px]" />
                    <col className="w-[250px]" />
                    <col className="w-[100px]" />
                    <col className="w-[200px]" />
                    <col className="w-[100px]" />
                    <col className="w-[100px]" />
                    <col className="w-[100px]" />
                    <col />
                </colgroup>
                <thead>
                    <tr>
                        {[0, 1, 2, 3, 4, 5, 6, 7].map((c) => <td key={c} className="h-[9px] border-r border-b border-white bg-[#e1e1e1]" />)}
                    </tr>
                    <tr>
                        <th scope="col" className="h-8 border-r border-b border-white bg-[#e1e1e1] font-normal leading-4">Material<br />No.</th>
                        {columns.map((c, i) => (
                            <th key={i} scope="col" className="h-8 overflow-hidden border-r border-b border-[#d4d4d4] bg-[#efefef] font-normal whitespace-nowrap">
                                <div className="h-4 leading-4">{c.top}</div>
                                <div className="h-4 leading-4">{c.bottom}</div>
                            </th>
                        ))}
                    </tr>
                </thead>
                <tbody>
                    {[0, 1, 2, 3, 4, 5, 6, 7, 8].map((r) => (
                        <tr key={r}>
                            <th scope="row" className="h-4 border-r border-b border-white bg-[#e1e1e1] font-normal">{r + 1}</th>
                            {columns.map((_, c) => <Cell key={c} row={r} col={c} />)}
                        </tr>
                    ))}
                </tbody>
            </table>
        </section>
    );
}

/* ---------- error dialog ---------- */

function ErrorDialog() {
    return (
        <div role="dialog" aria-labelledby="dialog-title" className="absolute top-[542px] left-[290px] w-[455px] border-[3px] border-[#ea4b45] bg-white">
            <div className="flex h-[29px] items-center pr-3.5 pl-[7px]">
                <AppLogo />
                <h2 id="dialog-title" className="ml-[5px] flex-1">Plausibility Check Error</h2>
                <button type="button" aria-label="Help" className="w-6 text-[13px] font-semibold">?</button>
                <button type="button" aria-label="Close dialog" className="ml-[22px] flex w-5 justify-center"><X size={18} strokeWidth={1} className="shrink-0 text-[#aaa]" /></button>
            </div>
            <div className="bg-[#d0d0d6] pt-[9px] pr-[9px] pb-2 pl-2">
                <div className="bg-white px-[5px] pb-1">
                    <div className="flex">
                        <svg width="58" height="52" viewBox="0 0 58 52" className="mt-[10px] ml-[3px] shrink-0">
                            <defs>
                                <linearGradient id="warn" x1="0" y1="0" x2="0" y2="1">
                                    <stop offset="0" stopColor="#3e3e3e" />
                                    <stop offset=".6" stopColor="#666" />
                                    <stop offset="1" stopColor="#3a3a3a" />
                                </linearGradient>
                            </defs>
                            <path d="M25.500 3.500Q29 -1 32.500 3.500L56.500 46Q58 50.500 53.500 51H4.500Q0 50.500 1.500 46Z" fill="url(#warn)" stroke="#2c2c2c" />
                            <path d="M25.500 13H32.500L31.500 36H26.500Z" fill="#fff" />
                            <circle cx="29" cy="42" r="4" fill="#fff" />
                        </svg>
                        <div className="ml-[13px] flex-1 pt-3">
                            <label htmlFor="object" className="block h-5 leading-[18px]">Object</label>
                            <input id="object" readOnly value="Surface No. 1" className="block h-5 w-full bg-[#e5e5e5] px-[3px] outline-none" />
                            <label htmlFor="field" className="mt-[15px] block h-5 leading-[18px]">Input field</label>
                            <input id="field" readOnly value="Boundary line No." className="block h-5 w-full bg-[#e5e5e5] px-[3px] outline-none" />
                        </div>
                    </div>
                    <textarea aria-label="Message" readOnly value="Boundary line crosses rotation axis." className="mt-[17px] block h-[60px] w-full resize-none rounded-sm border border-[#cbcbcb] bg-white px-1 pt-0.5 leading-[18px] outline-none" />
                </div>
            </div>
            <div className="relative flex h-[42px] items-start justify-end gap-[10px] pt-[11px] pr-[10px]">
                <button type="button" className="h-[21px] w-[81px] border-2 border-[#0078d7] bg-[#e1e1e1] leading-none">Go to Table</button>
                <button type="button" className="h-[21px] w-[81px] border border-[#adadad] bg-[#e1e1e1] leading-none">Close</button>
                <svg width="9" height="9" viewBox="0 0 9 9" className="absolute right-[3px] bottom-[3px]" fill="#bfbfbf"><path d="M6 0h2v2H6ZM6 3h2v2H6ZM6 6h2v2H6ZM3 3h2v2H3ZM3 6h2v2H3ZM0 6h2v2H0Z" /></svg>
            </div>
        </div>
    );
}

const menus = ["File", "Edit", "View", "Insert", "Assign", "Calculate", "Results", "Tools", "Options", "Window", "CAD-BIM", "Help"];

export default function App() {
    return (
        <div className="relative flex h-screen flex-col overflow-hidden bg-[#f7f7f7] font-['Open_Sans','Noto_Sans',sans-serif] text-[11px] text-black">
            <header className="flex h-[22px] shrink-0 items-center bg-white">
                <AppLogo />
                <h1 className="ml-1.5">Dlubal RFEM | 6.02.0008 | Rotated Surface.rf6 | Testordner</h1>
            </header>
            <nav className="flex h-5 shrink-0 items-center">
                <span className="w-[15px] overflow-hidden"><BridgeLogo /></span>
                {menus.map((m) => <button key={m} type="button" className="px-2">{m}</button>)}
            </nav>
            <MainToolbar />
            <ModelToolbar />
            <div className="flex min-h-0 flex-1 gap-1">
                <Navigator />
                <main className="flex min-w-0 flex-1 flex-col">
                    <ModelView />
                    <TablePanel />
                </main>
            </div>
            <Annotations />
            <ErrorDialog />
        </div>
    );
}
